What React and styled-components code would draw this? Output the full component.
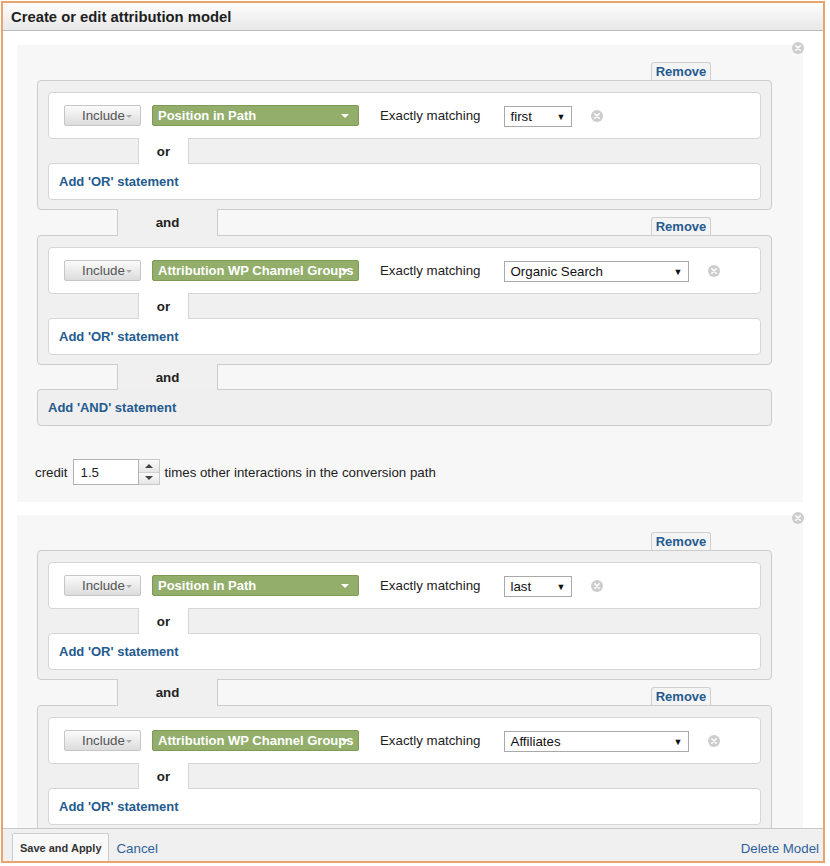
import React from 'react';
import styled, { createGlobalStyle } from 'styled-components';

const GlobalStyle = createGlobalStyle`
  body {
    margin: 0;
    background: #fff;
    font-family: "Liberation Sans", Arial, sans-serif;
    font-size: 13.3px;
    color: #222;
  }
`

const blue = '#245b8f';

const Frame = styled.div`
  margin: 1px 0 0 1px;
  width: 824px;
  height: 862px;
  box-sizing: border-box;
  border: 2px solid #e8a46a;
  display: flex;
  flex-direction: column;
  overflow: hidden;
`
const Header = styled.div`
  height: 28px;
  box-sizing: border-box;
  padding: 0 8px;
  display: flex;
  align-items: center;
  background: linear-gradient(#fdfdfd, #e8e8e8);
  border-bottom: 1px solid #bcbcbc;
  font-size: 14.8px;
  font-weight: 700;
  color: #1e1e1e;
`
const Body = styled.div`
  flex: 1;
  overflow: hidden;
  padding: 14px 20px 0 14px;
  display: flex;
  flex-direction: column;
  gap: 13px;
  background: #fff;
`
const Panel = styled.div`
  position: relative;
  flex-shrink: 0;
  background: #f7f7f7;
  padding: 17px 31px 17px 20px;
`
const PanelClose = styled.div`
  position: absolute;
  top: -3px;
  right: -1px;
  display: flex;
`
const TabRow = styled.div`
  display: flex;
  align-items: flex-end;
  height: ${props => props.h || 18}px;
`
const RemoveTab = styled.div`
  margin-left: auto;
  margin-right: 61px;
  width: 60px;
  height: 18px;
  box-sizing: border-box;
  border: 1px solid #cfcfcf;
  border-bottom: none;
  border-radius: 3px 3px 0 0;
  background: #f4f4f4;
  color: ${blue};
  font-size: 13px;
  font-weight: 700;
  display: flex;
  align-items: center;
  justify-content: center;
`
const AndTab = styled.div`
  position: relative;
  z-index: 1;
  align-self: stretch;
  margin: -1px 0 -1px 80px;
  width: 101px;
  box-sizing: border-box;
  background: #f0f0f0;
  border-left: 1px solid #cccccc;
  border-right: 1px solid #cccccc;
  display: flex;
  align-items: center;
  justify-content: center;
  font-weight: 700;
  color: #222;
`
const Group = styled.div`
  background: #f0f0f0;
  border: 1px solid #cccccc;
  border-radius: 4px;
  padding: 11px 10px 9px 10px;
`
const RuleRow = styled.div`
  height: 47px;
  box-sizing: border-box;
  background: #fff;
  border: 1px solid #d6d6d6;
  border-radius: 4px;
  padding: 0 15px;
  display: flex;
  align-items: center;
`
const OrConnector = styled.div`
  display: flex;
  height: 24px;
`
const OrTab = styled.div`
  position: relative;
  z-index: 1;
  margin: -1px 0 -1px 90px;
  width: 51px;
  box-sizing: border-box;
  background: #fff;
  border-left: 1px solid #d6d6d6;
  border-right: 1px solid #d6d6d6;
  display: flex;
  align-items: center;
  justify-content: center;
  font-weight: 700;
  color: #222;
`
const AddBox = styled.div`
  height: 37px;
  box-sizing: border-box;
  background: ${props => props.gray ? '#efefef' : '#fff'};
  border: 1px solid ${props => props.gray ? '#cccccc' : '#d6d6d6'};
  border-radius: 4px;
  padding-left: 10px;
  display: flex;
  align-items: center;
  color: ${blue};
  font-size: 13px;
  font-weight: 700;
`
const IncludeButton = styled.div`
  width: 77px;
  height: 21px;
  box-sizing: border-box;
  border: 1px solid #c6c6c6;
  border-radius: 2px;
  background: linear-gradient(#fbfbfb, #dcdcdc);
  color: #555;
  display: flex;
  align-items: center;
  padding-left: 17px;
`
const TinyArrow = styled.span`
  margin-left: 1px;
  margin-top: 2px;
  width: 0;
  height: 0;
  border-left: 3px solid transparent;
  border-right: 3px solid transparent;
  border-top: 3px solid #aaa;
`
const DimSelect = styled.div`
  position: relative;
  margin-left: 11px;
  width: 207px;
  height: 21px;
  box-sizing: border-box;
  background: #93ae6b;
  border: 1px solid #7d9a57;
  border-radius: 2px;
  color: #fff;
  font-size: 13px;
  font-weight: 700;
  padding-left: 5px;
  display: flex;
  align-items: center;
  white-space: nowrap;
`
const WhiteArrow = styled.span`
  position: absolute;
  right: 9px;
  top: 8px;
  width: 0;
  height: 0;
  border-left: 4px solid transparent;
  border-right: 4px solid transparent;
  border-top: 4px solid #fff;
`
const MatchLabel = styled.span`
  margin-left: 21px;
  color: #222;
`
const ValueSelect = styled.div`
  margin-left: 23px;
  margin-top: 2px;
  width: ${props => props.w}px;
  height: 21px;
  box-sizing: border-box;
  background: #fff;
  border: 1px solid #a9a9a9;
  padding: 0 5px 0 6px;
  display: flex;
  align-items: center;
  justify-content: space-between;
  color: #111;
`
const SelectArrow = styled.span`
  font-size: 9px;
  color: #111;
`
const ClearWrap = styled.span`
  margin-left: 19px;
  display: flex;
`
const CreditRow = styled.div`
  margin: 33px 0 0 -2px;
  display: flex;
  align-items: center;
  color: #222;
`
const CreditInput = styled.div`
  margin-left: 5px;
  width: 66px;
  height: 26px;
  box-sizing: border-box;
  border: 1px solid #b0b0b0;
  background: #fff;
  padding-left: 7px;
  display: flex;
  align-items: center;
`
const Spinner = styled.div`
  width: 21px;
  height: 26px;
  box-sizing: border-box;
  border: 1px solid #c8c8c8;
  border-left: none;
  display: flex;
  flex-direction: column;
`
const SpinHalf = styled.div`
  flex: 1;
  display: flex;
  align-items: center;
  justify-content: center;
  background: linear-gradient(#fafafa, #e6e6e6);
  & + & {
    border-top: 1px solid #d0d0d0;
  }
`
const SpinArrow = styled.span`
  width: 0;
  height: 0;
  border-left: 4px solid transparent;
  border-right: 4px solid transparent;
  ${props => props.up ? 'border-bottom: 4px solid #444;' : 'border-top: 4px solid #444;'}
`
const CreditText = styled.span`
  margin-left: 5px;
`
const Footer = styled.div`
  height: 33px;
  flex-shrink: 0;
  box-sizing: border-box;
  border-top: 1px solid #c8c8c8;
  background: #f0f0f0;
  padding: 4px 4px 0 9px;
  display: flex;
  align-items: flex-end;
`
const SaveButton = styled.div`
  height: 28px;
  box-sizing: border-box;
  padding: 0 6px 0 7px;
  border: 1px solid #cccccc;
  border-bottom: none;
  border-radius: 2px 2px 0 0;
  background: #f9f9f9;
  font-size: 11px;
  font-weight: 700;
  color: #333;
  display: flex;
  align-items: center;
`
const FooterLink = styled.span`
  align-self: center;
  margin-top: 3px;
  margin-left: ${props => props.right ? 'auto' : '8px'};
  color: #2f619a;
`

function ClearIcon() {
  return (
    <svg width="12" height="12" viewBox="0 0 12 12">
      <circle cx="6" cy="6" r="6" fill="#cdcdcd" />
      <path d="M3.8 3.8 L8.2 8.2 M8.2 3.8 L3.8 8.2" stroke="#fff" strokeWidth="1.6" strokeLinecap="round" />
    </svg>
  );
}

function Rule({ dimension, value, width }) {
  return (
    <Group>
      <RuleRow>
        <IncludeButton>Include<TinyArrow /></IncludeButton>
        <DimSelect>{dimension}<WhiteArrow /></DimSelect>
        <MatchLabel>Exactly matching</MatchLabel>
        <ValueSelect w={width}>{value}<SelectArrow>▼</SelectArrow></ValueSelect>
        <ClearWrap><ClearIcon /></ClearWrap>
      </RuleRow>
      <OrConnector><OrTab>or</OrTab></OrConnector>
      <AddBox>Add 'OR' statement</AddBox>
    </Group>
  );
}

function ModelPanel({ rules, credit }) {
  return (
    <Panel>
      <PanelClose><ClearIcon /></PanelClose>
      <TabRow><RemoveTab>Remove</RemoveTab></TabRow>
      {rules.map((rule, i) => (
        <React.Fragment key={i}>
          {i > 0 ? (
            <TabRow h={25}>
              <AndTab>and</AndTab>
              <RemoveTab>Remove</RemoveTab>
            </TabRow>
          ) : null}
          <Rule {...rule} />
        </React.Fragment>
      ))}
      {credit ? (
        <>
          <TabRow h={24}><AndTab>and</AndTab></TabRow>
          <AddBox gray>Add 'AND' statement</AddBox>
          <CreditRow>
            credit
            <CreditInput>{credit}</CreditInput>
            <Spinner>
              <SpinHalf><SpinArrow up /></SpinHalf>
              <SpinHalf><SpinArrow /></SpinHalf>
            </Spinner>
            <CreditText>times other interactions in the conversion path</CreditText>
          </CreditRow>
        </>
      ) : null}
    </Panel>
  );
}

function App() {
  const first = [
    { dimension: 'Position in Path', value: 'first', width: 68 },
    { dimension: 'Attribution WP Channel Groups', value: 'Organic Search', width: 185 },
  ];
  const second = [
    { dimension: 'Position in Path', value: 'last', width: 68 },
    { dimension: 'Attribution WP Channel Groups', value: 'Affiliates', width: 185 },
  ];

  return (
    <>
      <GlobalStyle />
      <Frame>
        <Header>Create or edit attribution model</Header>
        <Body>
          <ModelPanel rules={first} credit="1.5" />
          <ModelPanel rules={second} credit="1.0" />
        </Body>
        <Footer>
          <SaveButton>Save and Apply</SaveButton>
          <FooterLink>Cancel</FooterLink>
          <FooterLink right>Delete Model</FooterLink>
        </Footer>
      </Frame>
    </>
  );
}

export default App;
